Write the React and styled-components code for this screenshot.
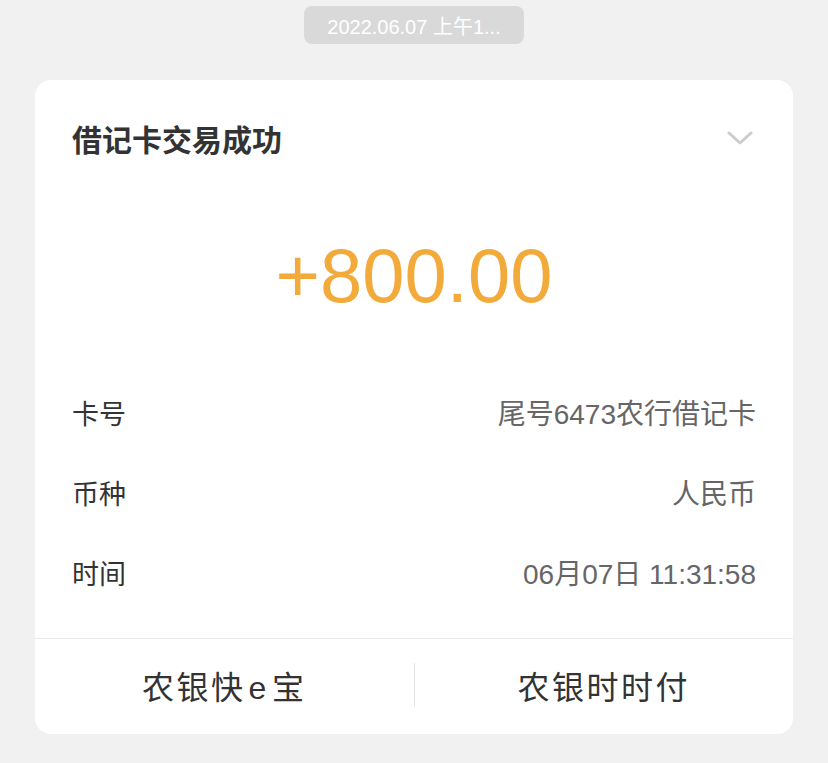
import React from "react";
import styled, { createGlobalStyle } from "styled-components";

const Global = createGlobalStyle`
  html, body { margin: 0; padding: 0; background: #f1f1f1; }
  body { font-family: "Liberation Sans", "Noto Sans CJK SC", sans-serif; }
`;

const Page = styled.div`
  width: 828px;
  height: 763px;
  background: #f1f1f1;
  display: flex;
  flex-direction: column;
  align-items: center;
  box-sizing: border-box;
  padding-top: 6px;
`;

const TimePill = styled.div`
  width: 220px;
  height: 38px;
  border-radius: 8px;
  background: #d9d9d9;
  color: #fff;
  font-size: 20px;
  display: flex;
  align-items: center;
  justify-content: center;
  white-space: nowrap;
`;

const Card = styled.div`
  margin-top: 36px;
  width: 758px;
  height: 654px;
  background: #fff;
  border-radius: 16px;
  display: flex;
  flex-direction: column;
  overflow: hidden;
`;

const Header = styled.div`
  height: 122px;
  box-sizing: border-box;
  padding: 0 40px 6px 37px;
  display: flex;
  align-items: center;
  justify-content: space-between;
`;

const Title = styled.div`
  font-size: 30px;
  font-weight: 700;
  color: #333;
  font-family: "Noto Sans CJK SC", sans-serif;
`;

const Amount = styled.div`
  margin-top: 24px;
  height: 100px;
  line-height: 100px;
  text-align: center;
  font-size: 76px;
  color: #f2aa3b;
`;

const Rows = styled.div`
  margin-top: 46px;
  padding: 0 37px;
  display: flex;
  flex-direction: column;
`;

const Row = styled.div`
  height: 80px;
  display: flex;
  align-items: center;
  justify-content: space-between;
`;

const Label = styled.span`
  color: #333;
  font-size: 27px;
`;

const Value = styled.span`
  color: #666;
  font-size: 28px;
`;

const Footer = styled.div`
  margin-top: 26px;
  border-top: 1px solid #ececec;
  flex: 1;
  box-sizing: border-box;
  padding-bottom: 4px;
  display: flex;
  align-items: center;
`;

const FooterButton = styled.div`
  flex: 1;
  text-align: center;
  font-size: 32px;
  letter-spacing: 2.5px;
  color: #333;
`;

const Latin = styled.span`
  margin: 0 3px;
`;

const VDivider = styled.div`
  width: 1px;
  height: 44px;
  background: #e6e6e6;
`;

const Chevron = () => (
  <svg width="26" height="16" viewBox="0 0 26 16">
    <path d="M2 3 L13 13 L24 3" fill="none" stroke="#cccccc" strokeWidth="3" strokeLinecap="round" strokeLinejoin="round" />
  </svg>
);

export default function App() {
  const rows = [
    ["卡号", "尾号6473农行借记卡"],
    ["币种", "人民币"],
    ["时间", "06月07日 11:31:58"],
  ];
  return (
    <>
      <Global />
      <Page>
        <TimePill>2022.06.07 上午1...</TimePill>
        <Card>
          <Header>
            <Title>借记卡交易成功</Title>
            <Chevron />
          </Header>
          <Amount>+800.00</Amount>
          <Rows>
            {rows.map(([l, v]) => (
              <Row key={l}>
                <Label>{l}</Label>
                <Value>{v}</Value>
              </Row>
            ))}
          </Rows>
          <Footer>
            <FooterButton>农银快<Latin>e</Latin>宝</FooterButton>
            <VDivider />
            <FooterButton>农银时时付</FooterButton>
          </Footer>
        </Card>
      </Page>
    </>
  );
}
